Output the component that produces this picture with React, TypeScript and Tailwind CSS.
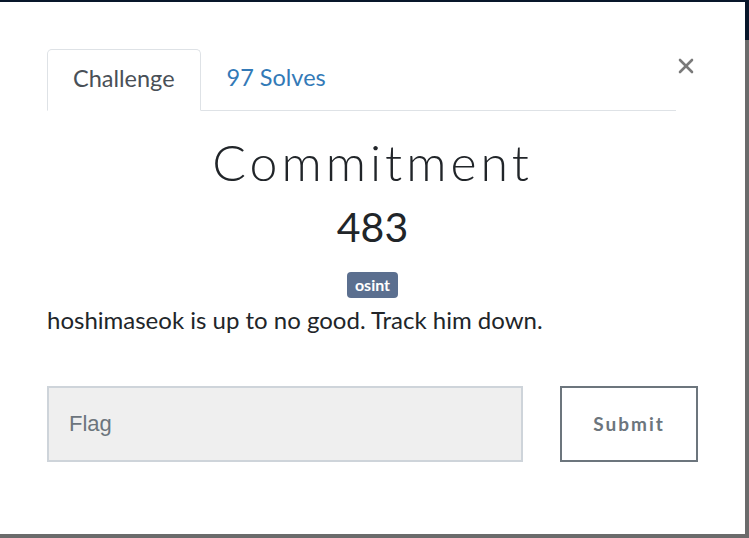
import { X } from 'lucide-react'

function Tabs() {
  return (
    <div className="flex w-[629px] border-b border-[#dee2e6]">
      <div className="-mb-px rounded-t-[5px] border border-[#dee2e6] border-b-white bg-white px-[25px] pb-[16px] pt-[12px] text-[23.5px] leading-[32px] text-[#495057]">
        Challenge
      </div>
      <div className="px-[26px] pb-[16px] pt-[12px] text-[23.5px] leading-[32px] text-[#337ab7]">97 Solves</div>
    </div>
  )
}

export default function App() {
  return (
    <div className="relative h-[538px] w-[749px] overflow-hidden bg-[#6b6b6b] font-['Lato',sans-serif]">
      <div className="h-[40px] w-full bg-[#08162a]" />
      <div className="absolute left-0 top-[2px] h-[532px] w-[745px] bg-white px-[47px] pt-[47px]">
        <button className="absolute right-[47px] top-[52px] text-[#7a7a7a]">
          <X size={24} strokeWidth={2.6} />
        </button>
        <Tabs />
        <div className="flex flex-col items-center text-[#212529]">
          <h1 className="mt-[21px] text-[50px] font-light leading-[60px] tracking-[4px]">Commitment</h1>
          <div className="mt-[10px] text-[41px] leading-[50px]">483</div>
          <span className="mt-[20px] rounded-[4px] bg-[#5b6f8f] px-[8px] py-[2px] text-[16px] font-bold leading-[22px] text-white">
            osint
          </span>
        </div>
        <p className="mt-[6px] text-[24px] leading-[32px] text-[#212529]">hoshimaseok is up to no good. Track him down.</p>
        <div className="mt-[50px] flex items-stretch justify-between">
          <input
            placeholder="Flag"
            className="h-[76px] w-[476px] border-2 border-[#ced4da] bg-[#efefef] px-[20px] font-['Liberation_Sans',sans-serif] text-[22px] text-[#495057] placeholder:text-[#6c757d] outline-none"
          />
          <button className="w-[138px] border-2 border-[#6c757d] bg-white text-[19px] font-bold tracking-[2px] text-[#6c757d]">
            Submit
          </button>
        </div>
      </div>
    </div>
  )
}
